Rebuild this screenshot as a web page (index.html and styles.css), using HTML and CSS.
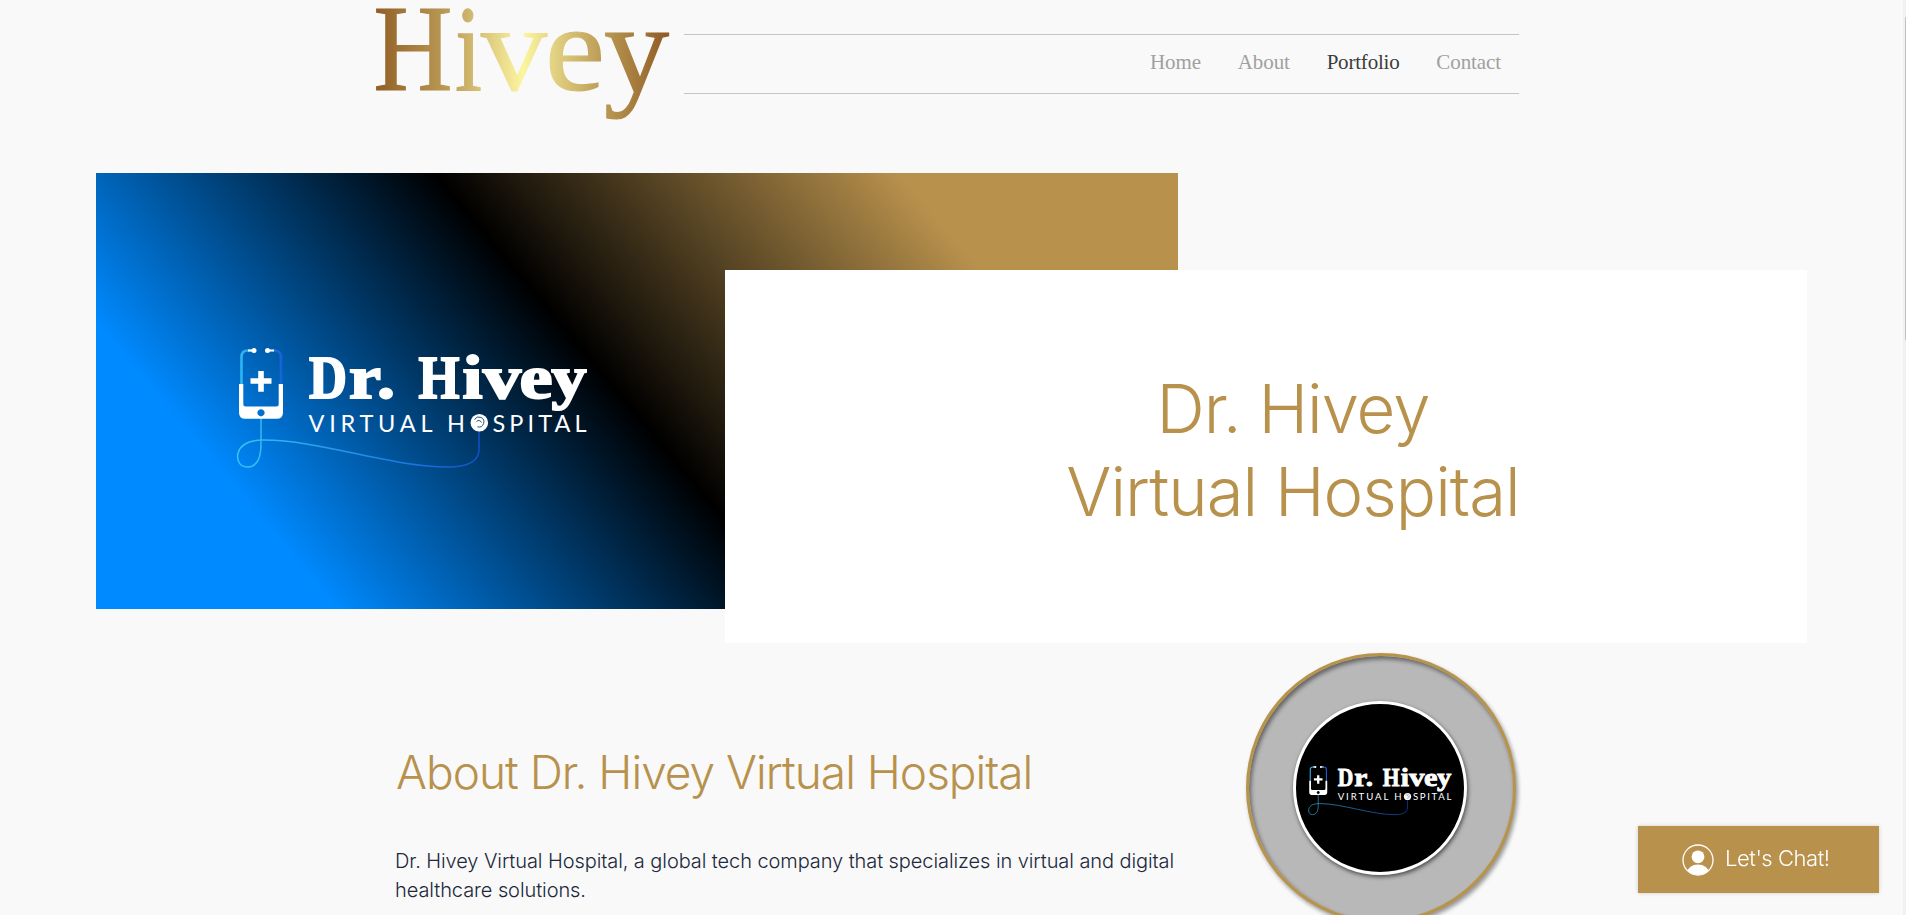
FILE: index.html
```html
<!DOCTYPE html>
<html lang="en">
<head>
<meta charset="utf-8">
<title>Dr. Hivey Virtual Hospital</title>
<link rel="stylesheet" href="styles.css">
</head>
<body>
<div class="page">
  <header class="header">
    <svg class="brand" viewBox="370 0 306 130" role="img" aria-label="Hivey">
      <defs>
        <linearGradient id="gold" gradientUnits="userSpaceOnUse" x1="376" y1="0" x2="670" y2="0">
          <stop offset="0" stop-color="#925f26"/>
          <stop offset=".24" stop-color="#ba9a55"/>
          <stop offset=".5" stop-color="#fcf5a0"/>
          <stop offset=".76" stop-color="#bd9e58"/>
          <stop offset="1" stop-color="#8f5923"/>
        </linearGradient>
      </defs>
      <g class="brand-text" fill="url(#gold)" stroke="url(#gold)">
        <text x="373.500" y="90" textLength="79" lengthAdjust="spacingAndGlyphs">H</text>
        <text x="455" y="90" textLength="27" lengthAdjust="spacingAndGlyphs">i</text>
        <text x="481" y="90" textLength="66" lengthAdjust="spacingAndGlyphs">v</text>
        <text x="545" y="90" textLength="60" lengthAdjust="spacingAndGlyphs">e</text>
        <text x="604" y="92" textLength="65" lengthAdjust="spacingAndGlyphs" class="brand-tail">y</text>
      </g>
    </svg>
    <nav class="nav">
      <a class="nav-link">Home</a>
      <a class="nav-link">About</a>
      <a class="nav-link current">Portfolio</a>
      <a class="nav-link">Contact</a>
    </nav>
  </header>

  <section class="hero">
    <div class="hero-banner">
      <svg class="hero-logo" viewBox="236 346 352 124" role="img" aria-label="Dr. Hivey Virtual Hospital">
        <defs>
          <linearGradient id="cord" gradientUnits="userSpaceOnUse" x1="237" y1="0" x2="480" y2="0">
            <stop offset="0" stop-color="#38c3f5"/>
            <stop offset=".5" stop-color="#2590e6"/>
            <stop offset="1" stop-color="#1250cc"/>
          </linearGradient>
          <linearGradient id="tube" gradientUnits="userSpaceOnUse" x1="240" y1="0" x2="283" y2="0">
            <stop offset="0" stop-color="#2fb9f2"/>
            <stop offset="1" stop-color="#1560d8"/>
          </linearGradient>
        </defs>
        <g id="drlogo">
          <path d="M261 418V444C261 458 257 467 247 467C239 467 236.500 459 238 453C241 443 251 440 264 440C320 440 390 467 448 467C466 467 479 463 479 449V431" fill="none" stroke="url(#cord)" stroke-width="1.5"/>
          <path d="M241.500 384V357Q241.500 350.500 248 350.500H255M268 350.500H274Q281 350.500 281 357V384" fill="none" stroke="url(#tube)" stroke-width="2.6"/>
          <g fill="#fff">
            <circle cx="254" cy="350.500" r="2.500"/><rect x="248" y="349.500" width="6" height="2"/>
            <circle cx="267.500" cy="350.500" r="2.500"/><rect x="268" y="349.500" width="6" height="2"/>
            <path d="M258.200 371h5.600v7.200h7.700v5.600h-7.700v8h-5.600v-8h-7.700v-5.600h7.700z"/>
            <path fill-rule="evenodd" d="M239 384h4.300v20q0 2.500 2.500 2.500h30.400q2.500 0 2.500-2.500v-20h4.300v28.500q0 6.300-6.300 6.300h-31.400q-6.300 0-6.300-6.300zM261 409.200a3.600 3.600 0 1 0 .01 0z"/>
            <circle cx="479.300" cy="422.700" r="8.800"/>
          </g>
          <path d="M474.500 419.500a5 5 0 1 1 3 7.300M476.500 421.500a3 3 0 0 1 5 1" fill="none" stroke="#123d62" stroke-width=".9"/>
          <g class="logo-name" fill="#fff" stroke="#fff">
            <text x="309" y="398" textLength="38" lengthAdjust="spacingAndGlyphs">D</text>
            <text x="349" y="398" textLength="32" lengthAdjust="spacingAndGlyphs">r</text>
            <text x="377" y="398" textLength="18" lengthAdjust="spacingAndGlyphs">.</text>
            <text x="418.500" y="398" textLength="41" lengthAdjust="spacingAndGlyphs">H</text>
            <text x="462.500" y="398" textLength="20" lengthAdjust="spacingAndGlyphs">i</text>
            <text x="483" y="398" textLength="38" lengthAdjust="spacingAndGlyphs">v</text>
            <text x="519.500" y="398" textLength="33" lengthAdjust="spacingAndGlyphs">e</text>
            <text class="logo-tail" x="551.500" y="396.500" textLength="35" lengthAdjust="spacingAndGlyphs">y</text>
          </g>
          <g class="logo-sub" fill="#fff">
            <text x="308.500" y="431.500" textLength="124">VIRTUAL</text>
            <text x="447" y="431.500">H</text>
            <text x="492.500" y="431.500" textLength="94">SPITAL</text>
          </g>
        </g>
      </svg>
    </div>
    <div class="hero-card"><h1 class="hero-title">Dr. Hivey<br>Virtual Hospital</h1></div>
  </section>

  <section class="about-section">
    <div class="about-copy">
      <h2 class="about-title">About Dr. Hivey Virtual Hospital</h2>
      <p class="about-text">Dr. Hivey Virtual Hospital, a global tech company that specializes in virtual and digital<br>healthcare solutions.</p>
    </div>
    <div class="badge">
      <div class="badge-inner">
        <svg class="badge-logo" viewBox="236 346 352 124"><use href="#drlogo"/></svg>
      </div>
    </div>
  </section>
</div>

<button class="chat">
  <svg class="chat-icon" viewBox="0 0 32 32">
    <defs><clipPath id="face"><circle cx="16" cy="16" r="15"/></clipPath></defs>
    <circle cx="16" cy="16" r="15" fill="none" stroke="#fff" stroke-width="1.300"/>
    <circle cx="16" cy="12.800" r="6.400" fill="#fff"/>
    <ellipse cx="16" cy="29" rx="11" ry="8.500" fill="#fff" clip-path="url(#face)"/>
  </svg>
  <span class="chat-label">Let's Chat!</span>
</button>
<div class="scrollbar"><div class="thumb"></div></div>
</body>
</html>
```
FILE: styles.css
```css
* { box-sizing: border-box; }
body { margin: 0; height: 915px; overflow: hidden; background: #f9f9f9; }
svg { overflow: visible; }
.page { width: 1903px; height: 915px; overflow: hidden; font-family: Inter, "Liberation Sans", sans-serif; font-weight: 300; }

.header { display: flex; align-items: flex-start; height: 173px; padding-left: 370px; }
.brand { width: 306px; height: 130px; flex: none; }
.brand-text { font: 122px "Liberation Serif", serif; stroke-width: 1.2; }
.brand-tail { font-size: 126px; }
.nav { display: flex; width: 835px; height: 60px; margin: 34px 0 0 8px; padding: 0 18px 0 466px; justify-content: space-between; align-items: center; border-top: 1px solid #c4c4c4; border-bottom: 1px solid #c4c4c4; }
.nav-link { font: 21px/30px "Liberation Serif", serif; letter-spacing: -.1px; color: #a0a0a0; padding-bottom: 5px; }
.current { color: #3c3c3c; letter-spacing: -.2px; }

.hero { display: grid; grid-template-columns: 629px 453px 629px; grid-template-rows: 97px 339px 34px; margin-left: 96px; }
.hero-banner { grid-area: 1 / 1 / 3 / 3; padding: 173px 0 0 140px; background: linear-gradient(50deg, #008aff 184px, #000 539px, #b8914c 895px); }
.hero-logo { display: block; width: 352px; height: 124px; }
.logo-name { font: bold 62px "Liberation Serif", serif; stroke-width: 2; }
.logo-tail { font-size: 59px; }
.logo-sub { font: 23.500px Lato, sans-serif; }
.hero-card { grid-area: 2 / 2 / 4 / 4; background: #fff; }
.hero-title { margin: 0; padding: 97px 0 0 54px; text-align: center; font-size: 67px; line-height: 83px; font-weight: 300; letter-spacing: -1px; color: #b8914c; }

.about-section { display: flex; justify-content: space-between; width: 1120px; margin-left: 396px; }
.about-title { margin: 99px 0 0; font-size: 46px; line-height: 60px; font-weight: 300; letter-spacing: -1px; color: #b8914c; white-space: nowrap; }
.about-text { margin: 45px 0 0 -1px; font-size: 20px; line-height: 29px; letter-spacing: -.08px; color: #20283a; white-space: nowrap; }
.about-copy { width: 800px; }
.badge { flex: none; width: 270px; height: 270px; margin-top: 10px; padding: 45px 0 0 44px; border-radius: 50%; border: 3px solid #b8944b; background: #b8b8b8; box-shadow: 2px 3px 4px rgba(0,0,0,.4), inset 2px 3px 4px rgba(0,0,0,.45); }
.badge-inner { width: 174px; height: 174px; padding: 61px 0 0 12px; border: 3px solid #fff; border-radius: 50%; background: #000; box-shadow: 1px 2px 4px rgba(0,0,0,.6); }
.badge-logo { display: block; width: 144px; height: 51px; }

.chat { position: fixed; left: 1638px; top: 826px; width: 241px; height: 67px; display: flex; align-items: center; padding: 0 0 0 44px; gap: 11px; border: 0; background: #b8914c; box-shadow: 0 0 4px rgba(0,0,0,.18); color: #fff; }
.chat-icon { width: 32px; height: 32px; flex: none; }
.chat-label { padding-bottom: 3px; font: 300 22px/30px Inter, sans-serif; letter-spacing: -.45px; white-space: nowrap; }
.scrollbar { position: fixed; top: 0; right: 0; width: 3px; height: 915px; padding: 17px 0 0 2px; background: #f1f1f1; }
.thumb { height: 323px; background: #c1c1c1; }
```
